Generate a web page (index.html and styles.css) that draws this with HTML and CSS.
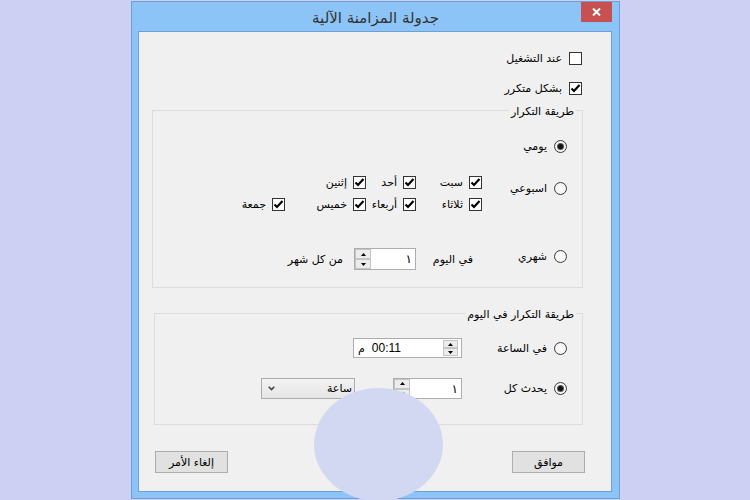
FILE: index.html
```html
<!DOCTYPE html>
<html lang="ar">
<head>
<meta charset="utf-8">
<title>جدولة المزامنة الآلية</title>
<link rel="stylesheet" href="styles.css">
</head>
<body>
<div class="window">
  <div class="titlebar">
    <div class="title">جدولة المزامنة الآلية</div>
    <div class="close"><svg width="9" height="8" viewBox="0 0 9 8"><path d="M1 0.5 L8 7.5 M8 0.5 L1 7.5" stroke="#fff" stroke-width="2" fill="none"/></svg></div>
  </div>
  <div class="client" dir="rtl">
    <div class="chk"><span class="cb"></span><span class="lbl">عند التشغيل</span></div>
    <div class="chk"><span class="cb on"><svg width="11" height="11" viewBox="0 0 11 11"><path d="M1.5 5.5 L4 8 L9.5 2" stroke="#000" stroke-width="2.2" fill="none"/></svg></span><span class="lbl">بشكل متكرر</span></div>

    <div class="group g1">
      <span class="legend">طريقة التكرار</span>
      <div class="row daily">
        <div class="opt"><span class="rb on"></span><span class="lbl">يومي</span></div>
      </div>
      <div class="row weekly">
        <div class="opt w85"><span class="rb"></span><span class="lbl">اسبوعي</span></div>
        <div class="days">
          <div class="day"><span class="cb on"><svg width="11" height="11" viewBox="0 0 11 11"><path d="M1.5 5.5 L4 8 L9.5 2" stroke="#000" stroke-width="2.2" fill="none"/></svg></span><span class="lbl">سبت</span></div>
          <div class="day"><span class="cb on"><svg width="11" height="11" viewBox="0 0 11 11"><path d="M1.5 5.5 L4 8 L9.5 2" stroke="#000" stroke-width="2.2" fill="none"/></svg></span><span class="lbl">أحد</span></div>
          <div class="day"><span class="cb on"><svg width="11" height="11" viewBox="0 0 11 11"><path d="M1.5 5.5 L4 8 L9.5 2" stroke="#000" stroke-width="2.2" fill="none"/></svg></span><span class="lbl">إثنين</span></div>
          <div class="day empty"></div>
          <div class="day"><span class="cb on"><svg width="11" height="11" viewBox="0 0 11 11"><path d="M1.5 5.5 L4 8 L9.5 2" stroke="#000" stroke-width="2.2" fill="none"/></svg></span><span class="lbl">ثلاثاء</span></div>
          <div class="day"><span class="cb on"><svg width="11" height="11" viewBox="0 0 11 11"><path d="M1.5 5.5 L4 8 L9.5 2" stroke="#000" stroke-width="2.2" fill="none"/></svg></span><span class="lbl">أربعاء</span></div>
          <div class="day"><span class="cb on"><svg width="11" height="11" viewBox="0 0 11 11"><path d="M1.5 5.5 L4 8 L9.5 2" stroke="#000" stroke-width="2.2" fill="none"/></svg></span><span class="lbl">خميس</span></div>
          <div class="day"><span class="cb on"><svg width="11" height="11" viewBox="0 0 11 11"><path d="M1.5 5.5 L4 8 L9.5 2" stroke="#000" stroke-width="2.2" fill="none"/></svg></span><span class="lbl">جمعة</span></div>
        </div>
      </div>
      <div class="row monthly">
        <div class="opt w94"><span class="rb"></span><span class="lbl">شهري</span></div>
        <span class="lbl w57">في اليوم</span>
        <div class="num n1">
          <span class="val">١</span>
          <div class="spin">
            <span class="sb"><svg width="5" height="3" viewBox="0 0 5 3"><path d="M0 3 L2.5 0 L5 3Z" fill="#000"/></svg></span>
            <span class="sb"><svg width="5" height="3" viewBox="0 0 5 3"><path d="M0 0 L2.5 3 L5 0Z" fill="#000"/></svg></span>
          </div>
        </div>
        <span class="lbl after">من كل شهر</span>
      </div>
    </div>

    <div class="group g2">
      <span class="legend">طريقة التكرار في اليوم</span>
      <div class="row hour">
        <div class="opt w105"><span class="rb"></span><span class="lbl">في الساعة</span></div>
        <div class="time" dir="ltr">
          <span class="tt">م</span><span class="tv">00:11</span>
          <div class="spin">
            <span class="sb"><svg width="5" height="3" viewBox="0 0 5 3"><path d="M0 3 L2.5 0 L5 3Z" fill="#000"/></svg></span>
            <span class="sb"><svg width="5" height="3" viewBox="0 0 5 3"><path d="M0 0 L2.5 3 L5 0Z" fill="#000"/></svg></span>
          </div>
        </div>
      </div>
      <div class="row every">
        <div class="opt w105"><span class="rb on"></span><span class="lbl">يحدث كل</span></div>
        <div class="num n2">
          <span class="val">١</span>
          <div class="spin">
            <span class="sb"><svg width="5" height="3" viewBox="0 0 5 3"><path d="M0 3 L2.5 0 L5 3Z" fill="#000"/></svg></span>
            <span class="sb"><svg width="5" height="3" viewBox="0 0 5 3"><path d="M0 0 L2.5 3 L5 0Z" fill="#9a9a9a"/></svg></span>
          </div>
        </div>
        <div class="combo">
          <span class="cv">ساعة</span>
          <svg width="7" height="5" viewBox="0 0 7 5"><path d="M0.7 0.8 L3.5 3.6 L6.3 0.8" stroke="#444" stroke-width="1.6" fill="none"/></svg>
        </div>
      </div>
    </div>

    <div class="buttons">
      <button class="btn">موافق</button>
      <button class="btn">إلغاء الأمر</button>
    </div>
  </div>
</div>
<div class="touch"></div>
</body>
</html>
```
FILE: styles.css
```css
* { box-sizing: border-box; }
html, body { margin: 0; }
body {
  width: 750px;
  height: 500px;
  padding: 1px 0 0 131px;
  background: #cdd0f2;
  font-family: "DejaVu Sans", sans-serif;
  font-size: 11px;
  color: #000;
  position: relative;
  overflow: hidden;
}
.window {
  width: 489px;
  height: 498px;
  background: #8cc4f8;
  border: 1px solid #6c9fd6;
  display: flex;
  flex-direction: column;
}
.titlebar {
  height: 29px;
  display: grid;
  grid-template-columns: 1fr auto 1fr;
}
.title {
  grid-column: 2;
  align-self: center;
  font-size: 15px;
  color: #333;
  padding-top: 2px;
}
.close {
  grid-column: 3;
  justify-self: end;
  width: 31px;
  height: 20px;
  margin-right: 7px;
  background: #c75050;
  display: flex;
  align-items: center;
  justify-content: center;
}
.close svg { display: block; }
.client {
  margin: 0 7px 0 6px;
  height: 461px;
  background: #f0f0f0;
  border: 1px solid #6f9fd3;
  display: flex;
  flex-direction: column;
  padding-top: 20px;
}
.lbl { white-space: nowrap; line-height: 13px; }
.chk {
  display: flex;
  align-items: center;
  gap: 7px;
  height: 13px;
  margin-right: 29px;
}
.chk + .chk { margin-top: 17px; }
.cb {
  width: 13px;
  height: 13px;
  flex: none;
  border: 1px solid #333;
  background: #fff;
  display: flex;
  align-items: center;
  justify-content: center;
}
.cb svg { display: block; }
.rb {
  width: 13px;
  height: 13px;
  flex: none;
  border-radius: 50%;
  border: 1px solid #3a3a3a;
  background: radial-gradient(circle, #fff 0%, #f4f4f4 60%, #e4e4e4 100%);
  display: flex;
  align-items: center;
  justify-content: center;
}
.rb.on::after {
  content: "";
  width: 5px;
  height: 5px;
  border-radius: 50%;
  background: #111;
  box-shadow: 0 0 0 1px #555;
}
.group {
  position: relative;
  border: 1px solid #dcdcdc;
  display: flex;
  flex-direction: column;
}
.legend {
  position: absolute;
  top: -6px;
  right: 6px;
  padding: 0 2px;
  background: #f0f0f0;
  line-height: 14px;
  white-space: nowrap;
}
.g1 { margin: 15px 28px 0 13px; height: 178px; }
.g2 { margin: 25px 28px 0 15px; height: 112px; }
.row {
  display: flex;
  align-items: center;
  margin-right: 15px;
}
.opt {
  display: flex;
  align-items: center;
  gap: 7px;
  height: 13px;
  flex: none;
}
.w85 { width: 85px; }
.w94 { width: 94px; }
.w105 { width: 105px; }
.w57 { width: 57px; flex: none; }
.daily { margin-top: 29px; height: 13px; }
.weekly { margin-top: 23px; align-items: flex-start; }
.weekly .opt { margin-top: 6px; }
.days {
  display: grid;
  grid-template-columns: 66px 50px 81px auto;
  grid-auto-rows: 13px;
  row-gap: 9px;
}
.day { display: flex; align-items: center; gap: 6px; }
.monthly { margin-top: 37px; height: 22px; }
.monthly .opt { margin-bottom: 6px; }
.after { margin-right: 11px; }
.num {
  height: 22px;
  border: 1px solid #adadad;
  background: #fff;
  display: flex;
  align-items: center;
  flex: none;
}
.n1 { width: 62px; }
.n2 { width: 69px; height: 21px; }
.val { flex: 1; padding-right: 3px; font-size: 12px; line-height: 14px; }
.spin {
  width: 16px;
  align-self: stretch;
  display: flex;
  flex-direction: column;
  flex: none;
}
.sb {
  flex: 1;
  background: #ececec;
  border: 1px solid #c4c4c4;
  display: flex;
  align-items: center;
  justify-content: center;
}
.sb svg { display: block; }
.hour { margin-top: 24px; height: 20px; }
.every { margin-top: 20px; height: 21px; }
.time {
  width: 109px;
  height: 20px;
  border: 1px solid #adadad;
  background: #fff;
  display: flex;
  align-items: center;
  padding: 1px 3px 1px 4px;
  flex: none;
}
.time .tt { margin-right: 7px; }
.time .tv { flex: 1; font-family: "Liberation Sans", sans-serif; font-size: 12px; }
.time .spin { width: 15px; }
.combo {
  width: 94px;
  height: 21px;
  margin-right: 38px;
  border: 1px solid #acacac;
  background: linear-gradient(#f2f2f2, #e6e6e6);
  display: flex;
  align-items: center;
  justify-content: space-between;
  padding: 0 2px 0 6px;
  flex: none;
}
.combo svg { display: block; }
.buttons {
  display: flex;
  justify-content: space-between;
  margin: 26px 26px 0 16px;
}
.btn {
  width: 73px;
  height: 22px;
  padding: 0;
  border: 1px solid #adadad;
  background: #e1e1e1;
  font-family: "DejaVu Sans", sans-serif;
  font-size: 11px;
  color: #000;
}
.touch {
  position: absolute;
  left: 314px;
  top: 388px;
  width: 129px;
  height: 113px;
  border-radius: 50%;
  background: #d2d8f1;
}
```
